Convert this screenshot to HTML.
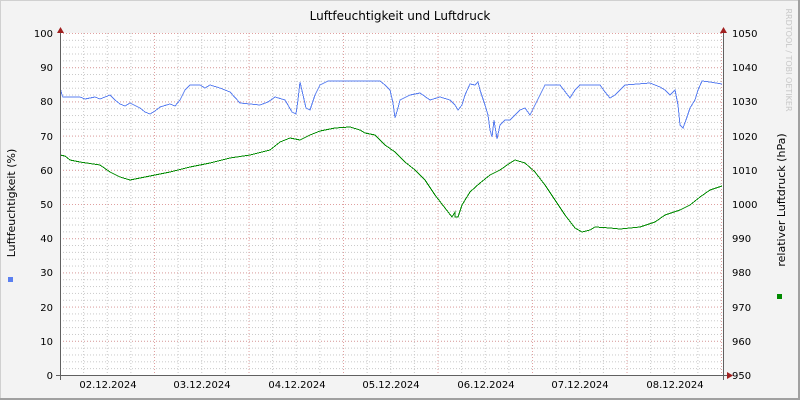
<!DOCTYPE html>
<html><head><meta charset="utf-8"><style>
html,body{margin:0;padding:0;width:800px;height:400px;overflow:hidden;background:#f3f3f3}
svg{display:block;font-family:"DejaVu Sans","Liberation Sans",sans-serif}
</style></head><body>
<svg width="800" height="400" viewBox="0 0 800 400" xmlns="http://www.w3.org/2000/svg">
<defs>
<pattern id="hmin" x="0" y="33" width="800" height="6.84" patternUnits="userSpaceOnUse"><line x1="0" y1="0.5" x2="800" y2="0.5" stroke="#c8c8c8" stroke-dasharray="1,2"/></pattern>
<pattern id="vmin" x="59.5" y="0" width="23.625" height="400" patternUnits="userSpaceOnUse"><line x1="0.5" y1="0" x2="0.5" y2="400" stroke="#c8c8c8" stroke-dasharray="1,2"/></pattern>
<pattern id="hmaj" x="0" y="33" width="800" height="34.2" patternUnits="userSpaceOnUse"><line x1="0" y1="0.5" x2="800" y2="0.5" stroke="#e0a0a0" stroke-dasharray="1,2"/></pattern>
<pattern id="vmaj" x="59.5" y="0" width="94.5" height="400" patternUnits="userSpaceOnUse"><line x1="0.5" y1="0" x2="0.5" y2="400" stroke="#e0a0a0" stroke-dasharray="1,2"/></pattern>
</defs>
<rect x="0.5" y="0.5" width="799" height="399" fill="#f3f3f3" stroke="#d0d0d0"/>
<rect x="0" y="398" width="800" height="2" fill="#a0a0a0"/>
<rect x="798" y="0" width="2" height="400" fill="#a0a0a0"/>
<rect x="61" y="33" width="662" height="342" fill="#fff"/>
<rect x="61" y="33" width="662" height="342" fill="url(#hmin)"/>
<rect x="61" y="33" width="662" height="342" fill="url(#vmin)"/>
<rect x="61" y="33" width="662" height="342" fill="url(#hmaj)"/>
<rect x="61" y="33" width="662" height="342" fill="url(#vmaj)"/>
<text x="400" y="20" font-size="12" text-anchor="middle" fill="#000">Luftfeuchtigkeit und Luftdruck</text>
<g font-size="10" fill="#000" text-anchor="end">
<text x="53" y="37">100</text><text x="53" y="71">90</text><text x="53" y="105">80</text><text x="53" y="140">70</text><text x="53" y="174">60</text><text x="53" y="208">50</text><text x="53" y="242">40</text><text x="53" y="276">30</text><text x="53" y="311">20</text><text x="53" y="345">10</text><text x="53" y="379">0</text>
</g>
<g font-size="10" fill="#000">
<text x="732" y="37">1050</text><text x="732" y="71">1040</text><text x="732" y="105">1030</text><text x="732" y="140">1020</text><text x="732" y="174">1010</text><text x="732" y="208">1000</text><text x="732" y="242">990</text><text x="732" y="276">980</text><text x="732" y="311">970</text><text x="732" y="345">960</text><text x="732" y="379">950</text>
</g>
<g font-size="10" fill="#000" text-anchor="middle">
<text x="108" y="388">02.12.2024</text><text x="202" y="388">03.12.2024</text><text x="297" y="388">04.12.2024</text><text x="391" y="388">05.12.2024</text><text x="486" y="388">06.12.2024</text><text x="580" y="388">07.12.2024</text><text x="675" y="388">08.12.2024</text>
</g>
<text transform="translate(15,203) rotate(-90)" font-size="11" text-anchor="middle" fill="#000">Luftfeuchtigkeit (%)</text>
<text transform="translate(785,200) rotate(-90)" font-size="11" text-anchor="middle" fill="#000">relativer Luftdruck (hPa)</text>
<text transform="translate(786,60) rotate(90)" font-size="8" text-anchor="middle" fill="#c8c8c8">RRDTOOL / TOBI OETIKER</text>
<rect x="8" y="277" width="5" height="5" fill="#5a7ff0"/>
<rect x="777" y="294" width="5" height="5" fill="#008a00"/>
<polyline fill="none" stroke="#5a7ff0" stroke-width="1" shape-rendering="crispEdges" points="60,92 61,91 62,95 63,97 80,97 85,99 95,97 100,99 110,95 115,100 120,104 125,106 130,103 140,108 145,112 150,114 155,111 160,107 170,104 175,106 180,100 185,90 190,85 200,85 205,88 210,85 220,88 230,92 240,103 260,105 268,102 275,97 285,100 292,112 296,114 298,100 300,82 303,95 306,108 310,110 315,95 320,85 328,81 380,81 385,85 390,90 393,103 395,118 398,108 400,100 410,95 420,93 430,100 440,97 450,100 455,105 458,110 462,105 465,95 470,84 475,85 478,82 480,90 485,105 488,115 490,130 492,137 494,120 497,139 500,125 505,120 510,120 515,115 520,110 525,108 530,115 535,105 540,95 545,85 560,85 570,98 575,90 580,85 600,85 605,92 610,98 615,95 620,90 625,85 650,83 660,87 665,90 670,95 675,90 678,105 680,125 683,128 686,120 690,108 695,100 698,90 702,81 710,82 722,84"/>
<polyline fill="none" stroke="#008a00" stroke-width="1" shape-rendering="crispEdges" points="60,155 65,156 70,160 80,162 100,165 110,172 120,177 130,180 140,178 150,176 170,172 190,167 210,163 230,158 250,155 270,150 280,142 290,138 300,140 310,135 320,131 335,128 350,127 360,130 365,133 375,135 385,145 395,152 405,162 415,170 425,180 435,195 445,208 452,217 455,212 455,217 458,217 462,205 470,192 480,183 490,175 500,170 510,163 515,160 525,163 535,172 545,185 555,200 565,215 575,228 582,232 590,230 595,227 610,228 620,229 640,227 655,222 665,215 680,210 690,205 700,197 710,190 722,186"/>
<line x1="60.5" y1="30" x2="60.5" y2="380" stroke="#606060"/>
<line x1="723.5" y1="30" x2="723.5" y2="380" stroke="#606060"/>
<line x1="56" y1="375.5" x2="727" y2="375.5" stroke="#606060"/>
<polygon points="57,33 64,33 60.5,27" fill="#a02020"/>
<polygon points="720,33 727,33 723.5,27" fill="#a02020"/>
<polygon points="727,372 727,379 733,375.5" fill="#a02020"/>
</svg>
</body></html>
